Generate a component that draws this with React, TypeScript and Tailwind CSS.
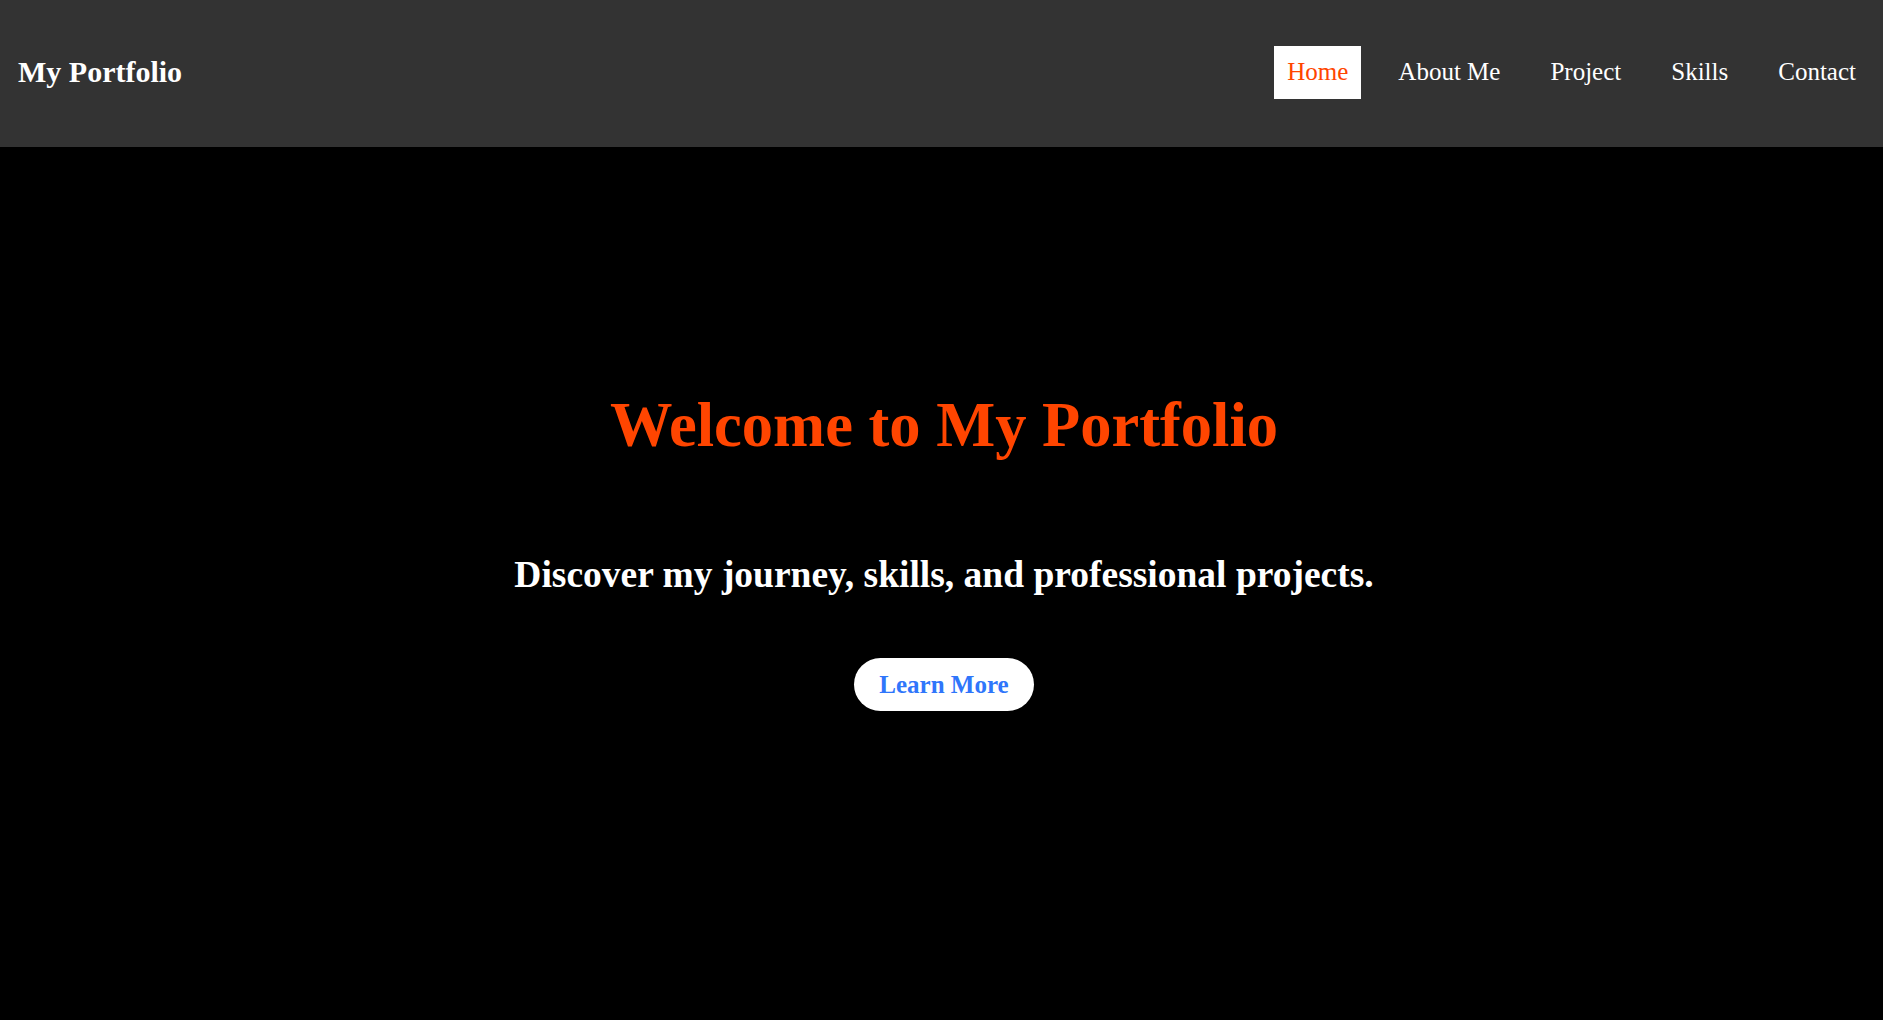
import React from "react";

export default function App() {
  const links = ["Home", "About Me", "Project", "Skills", "Contact"];
  return (
    <div className="min-h-screen w-full bg-black font-['Liberation_Serif','Times_New_Roman',serif]">
      <header className="flex h-[147px] items-center justify-between bg-[#333333] pl-[18px] pr-[14px]">
        <div className="mb-[4px] text-[30px] font-bold leading-none text-white">My Portfolio</div>
        <nav className="mb-[2px] flex items-center gap-[24px]">
          {links.map((l, i) => (
            <a
              key={l}
              href="#"
              className={
                i === 0
                  ? "flex h-[53px] items-center bg-white px-[13px] pb-[3px] text-[25px] leading-none text-[#ff4500]"
                  : "flex h-[53px] items-center px-[13px] pb-[3px] text-[25px] leading-none text-white"
              }
            >
              {l}
            </a>
          ))}
        </nav>
      </header>
      <section className="flex min-h-[873px] flex-col items-center bg-black pl-[5px]">
        <h1 className="mt-[247px] text-[62.5px] font-bold leading-none text-[#ff4500]">
          Welcome to My Portfolio
        </h1>
        <p className="mt-[99px] text-[37.5px] font-bold leading-none text-white">
          Discover my journey, skills, and professional projects.
        </p>
        <button className="mt-[65px] flex h-[53px] items-center rounded-full bg-white px-[25px] text-[25px] font-bold leading-none text-[#2f76fb]">
          Learn More
        </button>
      </section>
    </div>
  );
}
